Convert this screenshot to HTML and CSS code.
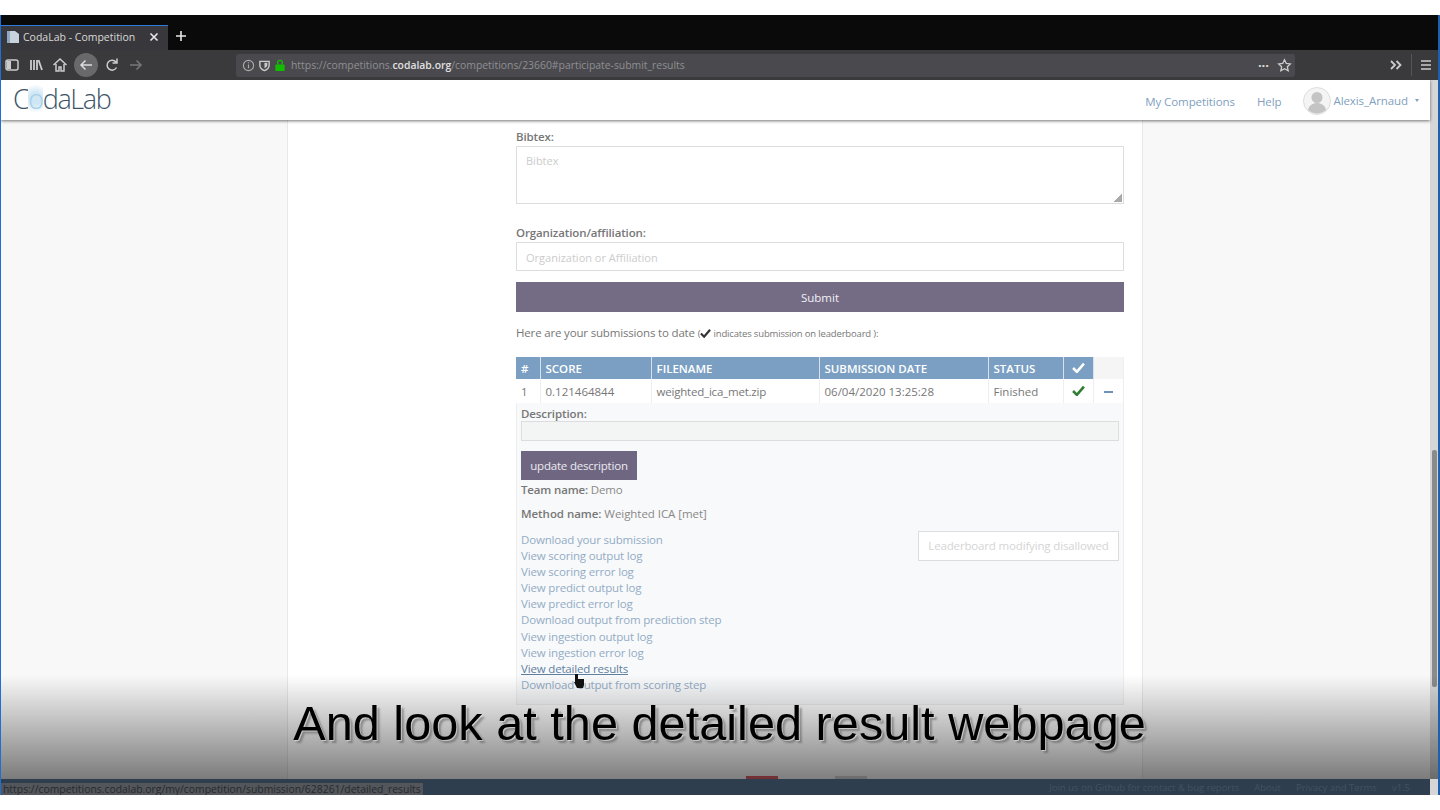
FILE: index.html
```html
<!DOCTYPE html>
<html lang="en">
<head>
  <meta charset="UTF-8">
  <title>CodaLab - Competition</title>
  <link rel="stylesheet" href="styles.css">
</head>
<body>
  <div class="screen">
    <div class="tabstrip">
      <div class="tab">
        <svg class="tab-icon" width="14" height="14" viewBox="0 0 14 14"><path d="M1 1h8l4 3v9H1z" fill="#c9d3de"/><path d="M1 1h3v12H1z" fill="#8fa7c0"/></svg>
        <span class="tab-title">CodaLab - Competition</span>
        <svg class="tab-close" width="10" height="10" viewBox="0 0 10 10"><path d="M1.5 1.5l7 7M8.5 1.5l-7 7" stroke="#e8e8e8" stroke-width="1.6"/></svg>
      </div>
      <svg class="tab-new" width="12" height="12" viewBox="0 0 12 12"><path d="M6 1v10M1 6h10" stroke="#e8e8e8" stroke-width="1.6"/></svg>
    </div>

    <div class="toolbar">
      <div class="tool-group">
        <svg width="16" height="16" viewBox="0 0 16 16"><rect x="2" y="3" width="12" height="10" rx="2" fill="none" stroke="#ccc" stroke-width="1.5"/><path d="M3 4h4v8H3z" fill="#ccc"/></svg>
        <svg width="16" height="16" viewBox="0 0 16 16"><path d="M3 3v10M6 3v10M9 3v10M10.500 3l3.500 10" stroke="#ccc" stroke-width="1.8" fill="none"/></svg>
        <svg width="16" height="16" viewBox="0 0 16 16"><path d="M1.5 8L8 2l6.5 6M4 7v7h3v-4h2v4h3V7" stroke="#ccc" stroke-width="1.5" fill="none"/></svg>
        <span class="back-btn">
          <svg width="16" height="16" viewBox="0 0 16 16"><path d="M14 8H3M7.5 3.5L3 8l4.5 4.5" stroke="#ddd" stroke-width="1.5" fill="none"/></svg>
        </span>
        <svg width="16" height="16" viewBox="0 0 16 16"><path d="M12.5 10.500A5 5 0 1 1 12 5M13 1.500V6H8.500" stroke="#ccc" stroke-width="1.5" fill="none"/></svg>
        <svg width="16" height="16" viewBox="0 0 16 16"><path d="M2 8h11M8.5 3.5L13 8l-4.5 4.5" stroke="#77777a" stroke-width="1.5" fill="none"/></svg>
      </div>
      <div class="urlbar">
        <svg width="13" height="13" viewBox="0 0 14 14"><circle cx="7" cy="7" r="5.5" fill="none" stroke="#aaa" stroke-width="1.2"/><path d="M7 6v4M7 3.5v1.200" stroke="#aaa" stroke-width="1.2"/></svg>
        <svg width="13" height="13" viewBox="0 0 14 14"><path d="M2 2.500h10v4c0 3-2 5-5 6-3-1-5-3-5-6z" fill="none" stroke="#ccc" stroke-width="1.5"/><path d="M7 4h3v2.500c0 1.500-1 2.500-3 3.500z" fill="#ccc"/></svg>
        <svg width="12" height="13" viewBox="0 0 12 14"><path d="M3.500 6V4a2.500 2.500 0 0 1 5 0v2" fill="none" stroke="#12bc00" stroke-width="1.5"/><rect x="1" y="6" width="10" height="7" rx="1" fill="#12bc00"/></svg>
        <span class="url">https://competitions.<b>codalab.org</b>/competitions/23660#participate-submit_results</span>
        <span class="url-end">
          <span class="url-dots">&middot;&middot;&middot;</span>
          <svg width="15" height="15" viewBox="0 0 16 16"><path d="M8 1.800l1.900 4 4.300.5-3.200 3 .9 4.300L8 11.500l-3.900 2.100.9-4.300-3.200-3 4.300-.5z" fill="none" stroke="#ccc" stroke-width="1.4"/></svg>
        </span>
      </div>
      <div class="tool-end">
        <svg width="14" height="12" viewBox="0 0 14 12"><path d="M2 2l4 4-4 4M7.500 2l4 4-4 4" stroke="#ccc" stroke-width="1.8" fill="none"/></svg>
        <span class="tool-sep"></span>
        <svg width="12" height="12" viewBox="0 0 12 12"><path d="M1 2h10M1 6h10M1 10h10" stroke="#ccc" stroke-width="1.5"/></svg>
      </div>
    </div>

    <div class="viewport">
      <nav class="site-nav">
        <div class="logo">C<span class="logo-o">o</span>daLab</div>
        <div class="nav-links">
          <a>My Competitions</a>
          <a>Help</a>
          <span class="nav-user">
            <svg class="avatar" width="28" height="28" viewBox="0 0 28 28"><circle cx="14" cy="14" r="13.5" fill="#f4f4f4" stroke="#ddd"/><circle cx="14" cy="10.500" r="5.5" fill="#c4c4c4"/><path d="M5 23c1-5 5-7 9-7s8 2 9 7c-5 4.500-13 4.500-18 0z" fill="#c4c4c4"/></svg>
            <a>Alexis_Arnaud</a>
            <span class="caret"></span>
          </span>
        </div>
      </nav>

      <div class="page">
        <div class="page-column">
          <label class="field-label">Bibtex:</label>
          <div class="textarea">Bibtex<span class="grip"></span></div>

          <label class="field-label org-label">Organization/affiliation:</label>
          <div class="text-input">Organization or Affiliation</div>

          <div class="submit-btn">Submit</div>

          <p class="intro">Here are your submissions to date <small>(<svg class="tick-inline" width="11" height="10" viewBox="0 0 12 10"><path d="M1 5.500l3.500 3.500L11 1.500" stroke="#333" stroke-width="2.4" fill="none"/></svg> indicates submission on leaderboard ):</small></p>

          <table class="results">
            <thead>
              <tr>
                <th class="col-num">#</th>
                <th class="col-score">SCORE</th>
                <th class="col-file">FILENAME</th>
                <th class="col-date">SUBMISSION DATE</th>
                <th class="col-status">STATUS</th>
                <th class="col-tick"><svg width="13" height="11" viewBox="0 0 12 10"><path d="M1 5.500l3.500 3.500L11 1.500" stroke="#fff" stroke-width="2.4" fill="none"/></svg></th>
                <th class="col-toggle"></th>
              </tr>
            </thead>
            <tbody>
              <tr>
                <td>1</td>
                <td>0.121464844</td>
                <td class="cell-file">weighted_ica_met.zip</td>
                <td>06/04/2020 13:25:28</td>
                <td>Finished</td>
                <td class="cell-center"><svg width="13" height="11" viewBox="0 0 12 10"><path d="M1 5.500l3.500 3.500L11 1.500" stroke="#2e7d32" stroke-width="2.4" fill="none"/></svg></td>
                <td class="cell-center"><span class="minus"></span></td>
              </tr>
            </tbody>
          </table>

          <div class="details">
            <div class="desc-label">Description:</div>
            <div class="desc-input"></div>
            <div class="update-btn">update description</div>
            <p class="meta"><b>Team name:</b> Demo</p>
            <p class="meta method"><b>Method name:</b> Weighted ICA [met]</p>
            <div class="details-bottom">
              <ul class="links">
                <li><a>Download your submission</a></li>
                <li><a>View scoring output log</a></li>
                <li><a>View scoring error log</a></li>
                <li><a>View predict output log</a></li>
                <li><a>View predict error log</a></li>
                <li><a>Download output from prediction step</a></li>
                <li><a>View ingestion output log</a></li>
                <li><a>View ingestion error log</a></li>
                <li><a class="hovered">View detailed results</a></li>
                <li><a>Download output from scoring step</a></li>
              </ul>
              <div class="disabled-btn">Leaderboard modifying disallowed</div>
            </div>
          </div>

          <div class="legend">
            <span class="swatch swatch-red"></span>
            <span class="swatch swatch-grey"></span>
          </div>
        </div>
      </div>

      <footer class="site-footer">
        <a>Join us on Github for contact &amp; bug reports</a>
        <a>About</a>
        <a>Privacy and Terms</a>
        <a>v1.5</a>
      </footer>

      <div class="scrollbar"><div class="scroll-thumb"></div></div>
      <div class="fade"></div>
      <div class="status-url">https://competitions.codalab.org/my/competition/submission/628261/detailed_results</div>
      <svg class="cursor" width="12" height="14" viewBox="0 0 12 14"><path d="M2 0h3v5h6v6l-1 3H4L1 8h1z" fill="#111"/></svg>
    </div>

    <div class="caption">And look at the detailed result webpage</div>
  </div>
</body>
</html>
```

FILE: styles.css
```css
* { box-sizing: border-box; }
html, body { margin: 0; height: 810px; overflow: hidden; background: #fff; }
body { font-family: "Open Sans", sans-serif; padding: 15px 0; color: #777; }
a { color: inherit; }
p { margin: 0; }

.screen { position: relative; height: 780px; display: flex; flex-direction: column; border-left: 1px solid #1f6fd6; border-right: 2px solid #1f5fae; background: #000; }

/* browser chrome */
.tabstrip { height: 35px; padding-top: 10px; display: flex; align-items: center; background: #0a0a0b; }
.tab { width: 167px; height: 25px; display: flex; align-items: center; padding: 0 9px 3px 5px; background: #38383c; border-top: 1px solid #2f7bdc; font-size: 10.5px; color: #d8d8d8; }
.tab-icon { margin-right: 3px; }
.tab-title { flex: 1; }
.tab-new { margin: -3px 0 0 7px; }

.toolbar { height: 30px; display: flex; align-items: center; background: #3a3a3d; }
.tool-group { width: 235px; display: flex; align-items: center; gap: 8px; padding-left: 3px; }
.back-btn { width: 24px; height: 24px; margin: 0 -2px; border-radius: 50%; background: #69696c; display: flex; align-items: center; justify-content: center; }
.urlbar { width: 1059px; height: 23px; display: flex; align-items: center; gap: 3px; padding: 0 3px 0 6px; background: #4a4a4e; border-radius: 3px; }
.url { margin-left: 2px; font-size: 10.4px; color: #8f8f93; white-space: nowrap; flex: 1; }
.url b { color: #e0e0e0; font-weight: 600; }
.url-end { display: flex; align-items: center; gap: 8px; color: #ddd; }
.url-dots { font-size: 13px; font-weight: 700; }
.tool-end { flex: 1; display: flex; align-items: center; justify-content: flex-end; gap: 8px; padding-right: 6px; }
.tool-sep { width: 1px; height: 22px; background: #555; }

/* page inside the browser */
.viewport { position: relative; flex: 1; display: flex; flex-direction: column; overflow: hidden; background: #f8f8f8; }
.site-nav { height: 40px; flex-shrink: 0; display: flex; align-items: center; justify-content: space-between; padding: 0 11px 0 12px; background: #fff; box-shadow: 0 1px 3px rgba(0,0,0,.55); position: relative; z-index: 2; margin-right: 8px; }
.logo { font-size: 27px; font-weight: 300; color: #3d5568; letter-spacing: -1.4px; line-height: 36px; margin-top: -3px; }
.logo-o { color: #a9cfe6; background: radial-gradient(circle, #cfe7f5 30%, #fff 72%); }
.nav-links { display: flex; align-items: center; gap: 22px; font-size: 11.5px; color: #7f9fc0; letter-spacing: -.08px; margin-top: 2px; }
.nav-user { display: flex; align-items: center; gap: 2px; margin-top: -1px; }
.caret { margin-left: 5px; border-top: 3px solid #7f9fc0; border-left: 2.5px solid transparent; border-right: 2.5px solid transparent; }

.page { flex: 1; min-height: 0; padding-left: 286px; overflow: hidden; }
.page-column { width: 856px; height: 900px; padding: 9px 18px 0 228px; background: #fff; border-left: 1px solid #e8e8e8; border-right: 1px solid #e8e8e8; }

.field-label { display: block; font-size: 11.5px; font-weight: 600; color: #777; line-height: 16px; margin-bottom: 1px; letter-spacing: -.12px; }
.org-label { margin-top: 21px; }
.textarea { position: relative; height: 58px; padding: 6px 9px; border: 1px solid #ddd; font-size: 11px; color: #ccc; }
.grip { position: absolute; right: 1px; bottom: 1px; width: 8px; height: 8px; background: linear-gradient(135deg, transparent 50%, #aaa 50%); }
.text-input { height: 29px; padding: 0 9px; line-height: 29px; border: 1px solid #ddd; font-size: 11px; color: #ccc; }
.submit-btn { height: 30px; margin-top: 11px; background: #746c85; color: #f2f0f5; font-size: 11.5px; line-height: 32px; text-align: center; }
.intro { margin-top: 13px; font-size: 11.5px; line-height: 16px; color: #777; letter-spacing: -.17px; }
.intro small { font-size: 9.5px; }
.tick-inline { vertical-align: -1px; }

.results { margin-top: 15px; width: 608px; border-collapse: collapse; table-layout: fixed; font-size: 11.5px; background: #fff; }
.results th { height: 22px; padding: 0 5px; background: #7a9fc3; color: #fff; font-weight: 600; text-align: left; border-right: 1px solid #d8e2ec; }
.results td { height: 24px; padding: 0 5px; color: #777; border-right: 1px solid #eee; }
.results .col-toggle { background: #f5f5f5; border-right: 1px solid #eee; }
.results .col-tick, .results .cell-center { text-align: center; padding: 0; }
.results .cell-file { letter-spacing: -.2px; }
.col-num { width: 24px; }
.col-score { width: 111px; }
.col-file { width: 168px; }
.col-date { width: 169px; }
.col-status { width: 75px; }
.col-tick { width: 30px; }
.minus { display: inline-block; width: 9px; height: 2px; background: #6d93b8; vertical-align: middle; }

.details { height: 302px; padding: 4px 4px 0; background: #f8f9fa; border: 1px solid #eee; border-top: 0; }
.desc-label { font-size: 11.5px; font-weight: 600; line-height: 14px; color: #777; letter-spacing: -.1px; }
.desc-input { height: 20px; background: #f3f4f4; border: 1px solid #ddd; }
.update-btn { width: 116px; height: 29px; margin-top: 10px; background: #6f6782; color: #ece9f0; font-size: 11.5px; line-height: 29px; text-align: center; letter-spacing: -.2px; }
.meta { font-size: 11.5px; line-height: 16px; color: #888; margin-top: 2px; letter-spacing: -.15px; }
.meta b { font-weight: 600; color: #777; }
.meta.method { margin-top: 8px; letter-spacing: -.05px; }
.details-bottom { display: flex; justify-content: space-between; align-items: flex-start; margin-top: 10px; }
.links { list-style: none; margin: 0; padding: 0; font-size: 11.5px; line-height: 16.1px; color: #93acc6; letter-spacing: -.17px; }
.hovered { color: #5f7f9f; text-decoration: underline; }
.disabled-btn { width: 201px; height: 30px; margin-top: -1px; border: 1px solid #ddd; background: #fff; color: #d5d5d5; font-size: 11.5px; line-height: 28px; text-align: center; letter-spacing: -.16px; }

.legend { display: flex; gap: 57px; margin: 71px 0 0 230px; }
.swatch { width: 32px; height: 20px; }
.swatch-red { background: #e0606a; }
.swatch-grey { background: #d8d8d8; }

.site-footer { height: 16px; flex-shrink: 0; display: flex; justify-content: flex-end; gap: 15px; padding-right: 28px; background: #2e3e4e; color: #43525f; font-size: 9.5px; line-height: 17px; position: relative; }

/* overlays */
.scrollbar { position: absolute; top: 0; right: 0; bottom: 0; width: 8px; background: #d6d6d6; }
.scroll-thumb { position: absolute; top: 370px; left: 2px; width: 5px; height: 237px; background: #8a8a8a; border-radius: 2px; }
.fade { position: absolute; left: 0; right: 0; top: 595px; height: 104px; background: linear-gradient(rgba(0,0,0,0), rgba(0,0,0,.5)); z-index: 3; pointer-events: none; }
.status-url { position: absolute; left: 0; bottom: 0; height: 12px; padding: 0 2px; background: #53565a; color: #262a2e; font-size: 10.4px; line-height: 12px; white-space: nowrap; z-index: 4; }
.cursor { position: absolute; left: 572px; top: 594px; z-index: 4; }
.caption { position: absolute; left: 0; right: 0; top: 679px; text-align: center; font-family: "Liberation Sans", sans-serif; font-size: 48.7px; line-height: 58px; color: #000; text-shadow: 1px 1px 0 rgba(235,235,235,.6), 3px 3px 2px rgba(60,60,60,.4); z-index: 5; }
```
